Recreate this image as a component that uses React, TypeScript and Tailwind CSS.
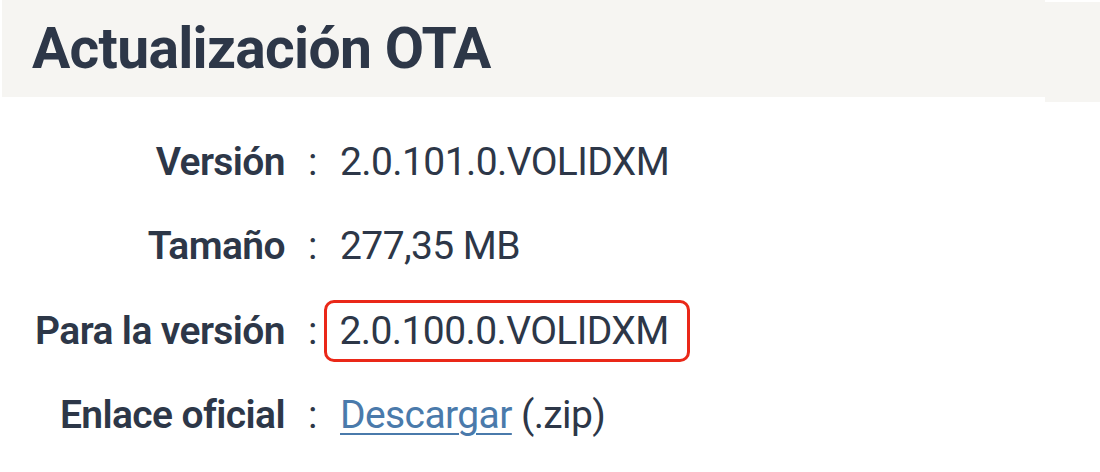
const rows: { label: string; value: React.ReactNode; boxed?: boolean }[] = [
  { label: "Versión", value: "2.0.101.0.VOLIDXM" },
  { label: "Tamaño", value: "277,35 MB" },
  { label: "Para la versión", value: "2.0.100.0.VOLIDXM", boxed: true },
  {
    label: "Enlace oficial",
    value: (
      <>
        <a href="#" className="text-[#4a7aab] underline decoration-[2px] underline-offset-[5px]">
          Descargar
        </a>{" "}
        (.zip)
      </>
    ),
  },
];

export default function App() {
  return (
    <div className="h-[472px] w-[1100px] overflow-hidden bg-white font-['Roboto',sans-serif] text-[#2d3748]">
      <div className="flex">
        <div className="ml-[2px] flex h-[97px] w-[1043px] items-center bg-[#f6f5f2] pl-[30px]">
          <h1 className="text-[57px] font-bold leading-none tracking-[-0.7px]">Actualización OTA</h1>
        </div>
        <div className="mt-[2px] h-[100px] flex-1 bg-[#f6f5f2]" />
      </div>

      <div className="-mt-[3px] pt-[21px]">
        {rows.map((r) => (
          <div key={r.label} className="grid h-[84.5px] grid-cols-[285px_55px_1fr] items-center text-[39px] leading-none tracking-[-0.6px]">
            <span className="text-right font-semibold">{r.label}</span>
            <span className="text-center">:</span>
            <span>
              {r.boxed ? (
                <span className="-ml-[16px] inline-flex h-[62px] items-center rounded-[10px] border-[3.5px] border-[#ea2818] pl-[12.5px] pr-[18.5px]">
                  {r.value}
                </span>
              ) : (
                r.value
              )}
            </span>
          </div>
        ))}
      </div>
    </div>
  );
}
